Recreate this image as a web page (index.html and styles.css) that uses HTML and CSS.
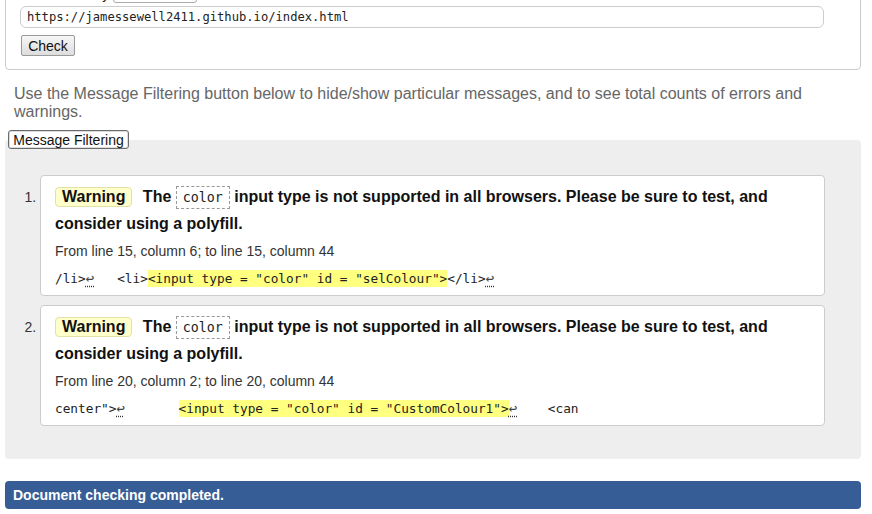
FILE: index.html
```html
<!DOCTYPE html>
<html lang="en">
<head>
<meta charset="utf-8">
<title>Nu Html Checker</title>
<link rel="stylesheet" href="styles.css">
</head>
<body>
<div class="page">
  <fieldset class="checker">
    <div class="by-row"><label class="by-label">Check by</label><span class="select"></span></div>
    <div class="url">https://jamessewell2411.github.io/index.html</div>
    <button class="check-btn" type="button">Check</button>
  </fieldset>
  <p class="hint">Use the Message Filtering button below to hide/show particular messages, and to see total counts of errors and warnings.</p>
  <button class="filter-btn" type="button">Message Filtering</button>
  <div class="results">
    <ol class="messages">
      <li class="msg">
        <p class="message"><span class="badge">Warning</span> The <code class="kw">color</code> input type is not supported in all browsers. Please be sure to test, and consider using a polyfill.</p>
        <p class="location">From line 15, column 6; to line 15, column 44</p>
        <p class="extract"><code>/li&gt;<b class="lf">↩</b>   &lt;li&gt;<mark>&lt;input type = "color" id = "selColour"&gt;</mark>&lt;/li&gt;<b class="lf">↩</b></code></p>
      </li>
      <li class="msg">
        <p class="message"><span class="badge">Warning</span> The <code class="kw">color</code> input type is not supported in all browsers. Please be sure to test, and consider using a polyfill.</p>
        <p class="location">From line 20, column 2; to line 20, column 44</p>
        <p class="extract"><code>center"&gt;<b class="lf">↩</b>       <mark>&lt;input type = "color" id = "CustomColour1"&gt;</mark><b class="lf">↩</b>    &lt;can</code></p>
      </li>
    </ol>
  </div>
  <div class="done">Document checking completed.</div>
</div>
</body>
</html>
```
FILE: styles.css
```css
html, body {
  margin: 0;
  padding: 0;
  background: #fff;
}

body {
  font-family: "Liberation Sans", Arial, sans-serif;
  color: #222;
}

.page {
  padding: 0 11px 0 5px;
}

.checker {
  margin: -30px 0 0;
  padding: 12px 14px 13px;
  border: 1px solid #ccc;
  border-radius: 4px;
  min-inline-size: 0;
}

.by-row {
  display: flex;
  align-items: flex-end;
  height: 20px;
  gap: 4px;
  font-size: 14px;
  line-height: 16px;
}

.by-label {
  margin-left: 31px;
  padding-bottom: 1px;
}

.select {
  display: block;
  width: 84px;
  height: 20px;
  box-sizing: border-box;
  border: 1px solid #aaa;
  border-radius: 3px;
  background: #fff;
}

.url {
  margin: 3px 22px 0 0;
  height: 22px;
  box-sizing: border-box;
  padding: 0 6px;
  border: 1px solid #ccc;
  border-radius: 6px;
  font-family: "DejaVu Sans Mono", "Liberation Mono", monospace;
  font-size: 12.15px;
  line-height: 20px;
  color: #222;
}

.check-btn {
  display: block;
  margin: 7px 0 0 1px;
  height: 21px;
  width: 54px;
  padding: 0;
  border: 1px solid #9a9a9a;
  border-radius: 2px;
  background: linear-gradient(#f7f7f7, #dddddd);
  font-family: "Liberation Sans", Arial, sans-serif;
  font-size: 14px;
  color: #111;
}

.hint {
  margin: 15px 0 9px;
  padding-left: 9px;
  font-size: 16px;
  line-height: 18px;
  color: #666;
}

.filter-btn {
  position: relative;
  z-index: 1;
  display: block;
  margin-left: 3px;
  height: 19px;
  width: 121px;
  padding: 0;
  border: 1px solid #6b6b6b;
  border-radius: 3px;
  background: #fff;
  box-shadow: inset 0 0 0 1px #dcdcdc;
  font-family: "Liberation Sans", Arial, sans-serif;
  font-size: 14px;
  line-height: 16px;
  color: #111;
}

.results {
  margin-top: -9px;
  padding: 35px 36px 33px 0;
  background: #eee;
  border-radius: 4px;
}

.messages {
  margin: 0;
  padding-left: 35px;
}

.msg {
  background: #fff;
  border: 1px solid #ccc;
  border-radius: 4px;
  padding: 7px 14px 7px;
  margin-bottom: 9px;
}

.msg:last-child {
  margin-bottom: 0;
}

.msg::marker {
  font-family: "Liberation Sans", Arial, sans-serif;
  font-size: 14px;
  font-weight: normal;
  color: #333;
}

.message {
  margin: 0;
  font-size: 16px;
  font-weight: bold;
  line-height: 27px;
  color: #111;
}

.badge {
  display: inline-block;
  line-height: 18px;
  padding: 0 6px;
  margin-right: 6px;
  border: 1px solid #e3e1a6;
  border-radius: 4px;
  background: #ffffcc;
}

.kw {
  font-family: "DejaVu Sans Mono", "Liberation Mono", monospace;
  font-size: 13.3px;
  font-weight: normal;
  line-height: 1;
  padding: 3px 6px;
  border: 1px dashed #999;
  color: #222;
}

.location {
  margin: 4px 0 0;
  font-size: 14px;
  line-height: 20px;
  color: #333;
}

.extract {
  margin: 7px 0 0;
  height: 20px;
  line-height: 20px;
  white-space: pre;
}

.extract code {
  font-family: "DejaVu Sans Mono", "Liberation Mono", monospace;
  font-size: 12.75px;
  line-height: 20px;
  color: #222;
}

.extract mark {
  background: #ffff80;
  color: inherit;
  padding: 1px 0;
}

.lf {
  display: inline-block;
  width: 1ch;
  line-height: 1;
  font-size: 14px;
  font-weight: normal;
  color: #444;
  text-decoration: underline dotted #333;
  text-underline-offset: 3px;
}

.done {
  margin-top: 22px;
  padding: 0 8px;
  background: #365d95;
  border-radius: 4px;
  color: #fff;
  font-size: 14px;
  font-weight: bold;
  line-height: 28px;
}
```
